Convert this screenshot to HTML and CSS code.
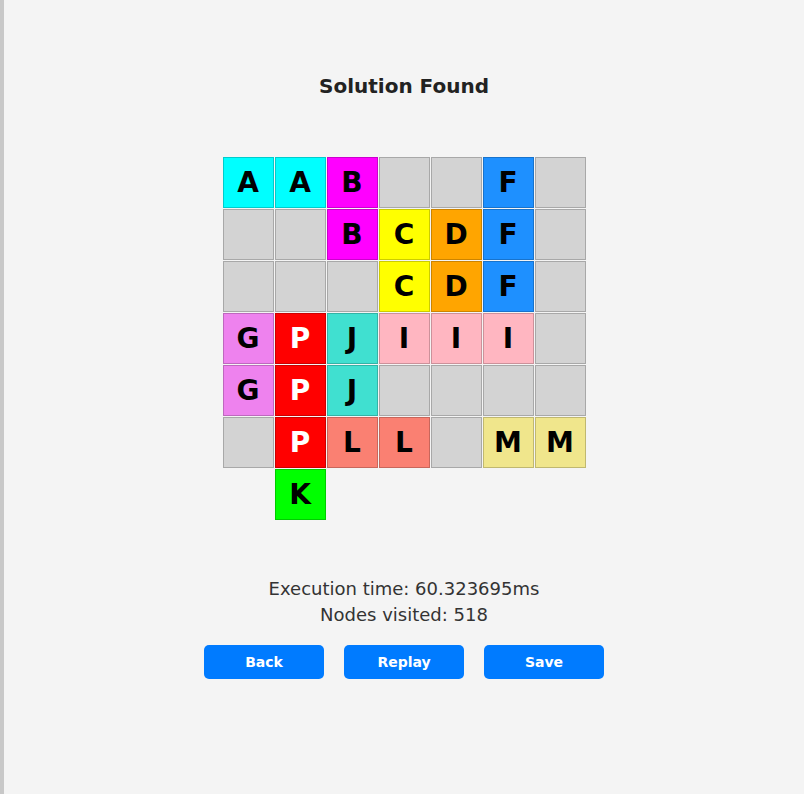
FILE: index.html
```html
<!DOCTYPE html>
<html lang="en">
<head>
<meta charset="utf-8">
<title>Solution Found</title>
<link rel="stylesheet" href="styles.css">
</head>
<body>
<main class="page">
  <h2 class="title">Solution Found</h2>
  <div class="board">
    <div class="cell c-a">A</div><div class="cell c-a">A</div><div class="cell c-b">B</div><div class="cell c-empty"></div><div class="cell c-empty"></div><div class="cell c-f">F</div><div class="cell c-empty"></div>
    <div class="cell c-empty"></div><div class="cell c-empty"></div><div class="cell c-b">B</div><div class="cell c-c">C</div><div class="cell c-d">D</div><div class="cell c-f">F</div><div class="cell c-empty"></div>
    <div class="cell c-empty"></div><div class="cell c-empty"></div><div class="cell c-empty"></div><div class="cell c-c">C</div><div class="cell c-d">D</div><div class="cell c-f">F</div><div class="cell c-empty"></div>
    <div class="cell c-g">G</div><div class="cell c-p">P</div><div class="cell c-j">J</div><div class="cell c-i">I</div><div class="cell c-i">I</div><div class="cell c-i">I</div><div class="cell c-empty"></div>
    <div class="cell c-g">G</div><div class="cell c-p">P</div><div class="cell c-j">J</div><div class="cell c-empty"></div><div class="cell c-empty"></div><div class="cell c-empty"></div><div class="cell c-empty"></div>
    <div class="cell c-empty"></div><div class="cell c-p">P</div><div class="cell c-l">L</div><div class="cell c-l">L</div><div class="cell c-empty"></div><div class="cell c-m">M</div><div class="cell c-m">M</div>
    <div class="slot"></div><div class="cell c-k">K</div>
  </div>
  <div class="stats">
    <p class="stat">Execution time: 60.323695ms</p>
    <p class="stat">Nodes visited: 518</p>
  </div>
  <div class="actions">
    <button class="btn" type="button">Back</button>
    <button class="btn" type="button">Replay</button>
    <button class="btn" type="button">Save</button>
  </div>
</main>
</body>
</html>
```

FILE: styles.css
```css
html, body {
  margin: 0;
  padding: 0;
}

body {
  min-height: 100vh;
  box-sizing: border-box;
  background: #f4f4f4;
  border-left: 4px solid #c8c8c8;
  font-family: "DejaVu Sans", "Liberation Sans", sans-serif;
  color: #333;
}

.page {
  display: flex;
  flex-direction: column;
  align-items: center;
  padding-top: 74px;
}

.title {
  margin: 0;
  font-size: 20px;
  line-height: 24px;
  font-weight: bold;
  color: #222;
}

.board {
  margin-top: 59px;
  display: grid;
  grid-template-columns: repeat(7, 51px);
  grid-auto-rows: 51px;
  gap: 1px;
}

.cell {
  box-sizing: border-box;
  border: 1px solid rgba(0, 0, 0, 0.2);
  display: flex;
  align-items: center;
  justify-content: center;
  font-size: 28px;
  font-weight: bold;
  color: #000;
}

.c-empty { background: #d3d3d3; }
.c-a { background: #00ffff; }
.c-b { background: #ff00ff; }
.c-c { background: #ffff00; }
.c-d { background: #ffa500; }
.c-f { background: #1e90ff; }
.c-g { background: #ee82ee; }
.c-p { background: #ff0000; color: #fff; }
.c-j { background: #40e0d0; }
.c-i { background: #ffb6c1; }
.c-l { background: #fa8072; }
.c-m { background: #f0e68c; }
.c-k { background: #00ff00; }

.stats {
  margin-top: 56px;
  text-align: center;
}

.stat {
  margin: 0;
  font-size: 18px;
  line-height: 26px;
  color: #333;
}

.actions {
  margin-top: 17px;
  display: flex;
  gap: 20px;
}

.btn {
  width: 120px;
  height: 34px;
  border: none;
  border-radius: 5px;
  background: #007bff;
  color: #fff;
  font-family: "DejaVu Sans", "Liberation Sans", sans-serif;
  font-size: 14px;
  font-weight: bold;
  cursor: pointer;
}
```
